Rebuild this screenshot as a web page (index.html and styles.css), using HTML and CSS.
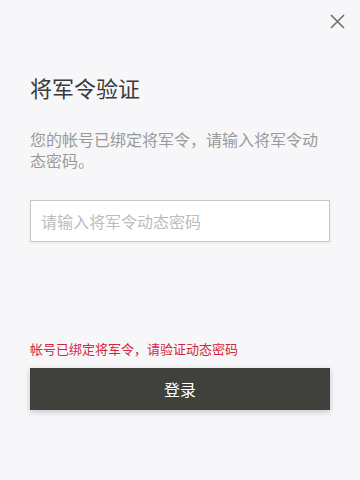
FILE: index.html
```html
<!DOCTYPE html>
<html lang="zh-CN">
<head>
<meta charset="utf-8">
<title>将军令验证</title>
<link rel="stylesheet" href="styles.css">
</head>
<body>
<div class="page">
  <div class="top">
    <button class="close" aria-label="关闭">
      <svg width="15" height="15" viewBox="0 0 15 15"><path d="M1 1L14 14M14 1L1 14" stroke="#6b6b6b" stroke-width="1.5" fill="none"/></svg>
    </button>
  </div>
  <div class="content">
    <h1 class="title">将军令验证</h1>
    <p class="desc">您的帐号已绑定将军令，请输入将军令动态密码。</p>
    <input class="field" type="text" placeholder="请输入将军令动态密码">
    <p class="error">帐号已绑定将军令，请验证动态密码</p>
    <button class="submit">登录</button>
  </div>
</div>
</body>
</html>
```

FILE: styles.css
```css
html, body {
  margin: 0;
  padding: 0;
  background: #f7f7f9;
}
body {
  font-family: "Noto Sans CJK SC", "Noto Sans", sans-serif;
}
.page {
  width: 360px;
  min-height: 480px;
  box-sizing: border-box;
}
.top {
  display: flex;
  justify-content: flex-end;
  padding: 14px 15px 0;
}
.close {
  width: 15px;
  height: 15px;
  padding: 0;
  border: 0;
  background: none;
  display: block;
  cursor: pointer;
}
.close svg {
  display: block;
}
.content {
  display: flex;
  flex-direction: column;
  padding: 0 30px;
}
.title {
  margin: 43px 0 0;
  font-size: 22px;
  line-height: 30px;
  font-weight: normal;
  color: #3a3a3a;
}
.desc {
  margin: 27px 0 0;
  font-size: 16px;
  line-height: 21px;
  color: #9a9a9a;
}
.field {
  margin: 29px 0 0;
  height: 42px;
  box-sizing: border-box;
  border: 1px solid #c8c8c8;
  background: #fff;
  padding: 0 10px;
  font-family: inherit;
  font-size: 16px;
  color: #333;
  outline: none;
  box-shadow: 0 1px 4px rgba(0,0,0,0.06);
}
.field::placeholder {
  color: #bcbcbc;
}
.error {
  margin: 98px 0 0;
  font-size: 13px;
  line-height: 18px;
  color: #d3263c;
}
.submit {
  margin: 10px 0 0;
  height: 42px;
  border: 0;
  background: #40403c;
  color: #fff;
  font-family: inherit;
  font-size: 16px;
  box-shadow: 0 2px 6px rgba(0,0,0,0.2);
  cursor: pointer;
}
```
